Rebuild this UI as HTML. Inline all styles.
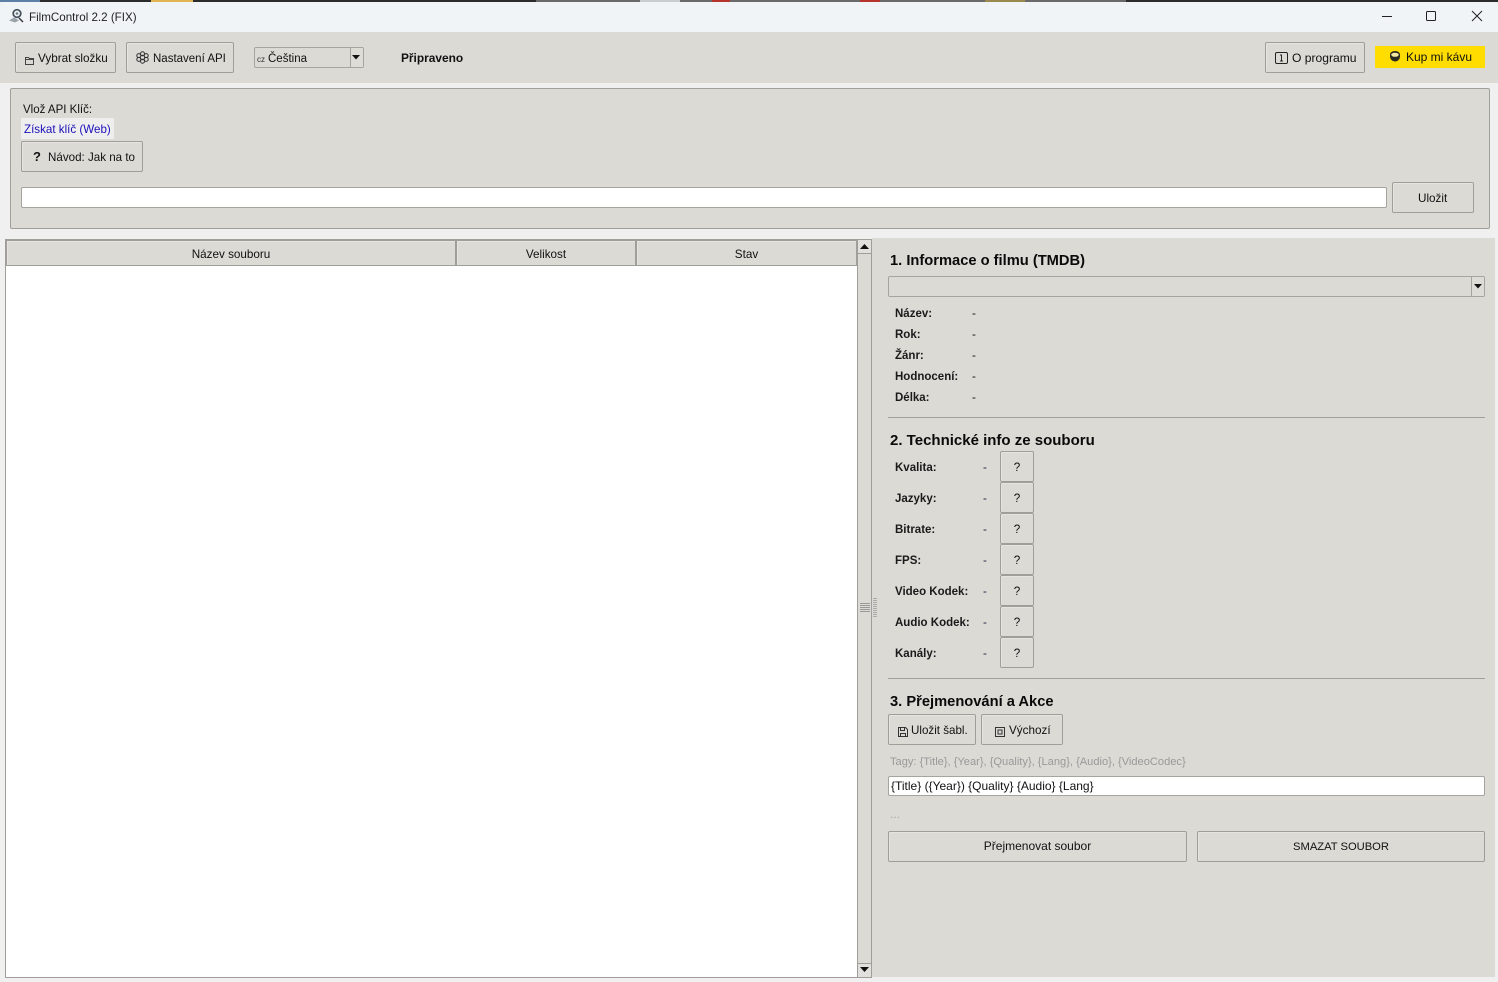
<!DOCTYPE html>
<html><head><meta charset="utf-8"><style>
html,body{margin:0;padding:0;width:1498px;height:982px;overflow:hidden;background:#f0f0f0}
body{position:relative;font-family:"Liberation Sans",sans-serif;font-size:11.7px;color:#111}
.a,.t,.b{position:absolute;box-sizing:border-box;white-space:nowrap}
.t{line-height:16px;height:16px;margin-top:1px}
.b{background:#dcdad5;border:1px solid #9f9e98;border-radius:2px;text-align:center;box-shadow:inset 1px 1px 0 #e6e4e0}
.l{font-weight:bold;font-size:11.5px;color:#1a1a1a}
.h{font-weight:bold;font-size:14.7px;line-height:18px;height:18px;color:#0a0a0a;margin-top:0}
.n{margin-top:0}
.q{width:34px;height:31px;line-height:32px;left:1000px}
svg{position:absolute;overflow:visible}
</style></head><body>
<div class="a" style="left:0;top:0;width:1498px;height:2px;background:#2b2b2b"></div>
<div class="a" style="left:0;top:0;width:40px;height:2px;background:#5c7fa8"></div>
<div class="a" style="left:151px;top:0;width:42px;height:2px;background:#e0b552"></div>
<div class="a" style="left:536px;top:0;width:590px;height:2px;background:#6a6a6a"></div>
<div class="a" style="left:640px;top:0;width:40px;height:2px;background:#c9cdd2"></div>
<div class="a" style="left:712px;top:0;width:18px;height:2px;background:#b7332d"></div>
<div class="a" style="left:860px;top:0;width:20px;height:2px;background:#b7332d"></div>
<div class="a" style="left:985px;top:0;width:40px;height:2px;background:#9a8a50"></div>
<div class="a" style="left:0;top:2px;width:1498px;height:30px;background:#f0f4f7;border-radius:6px 6px 0 0"></div>
<svg style="left:8px;top:8px" width="16" height="16" viewBox="0 0 16 16" fill="none"><path d="M1 12.500L6 9.500l5 3-4 2z" fill="#9aa2aa"/><circle cx="9" cy="5.500" r="3.800" stroke="#44505c" stroke-width="1.700"/><circle cx="9" cy="5.500" r="1.300" fill="#6d7882"/><path d="M11 10l4 4" stroke="#333" stroke-width="1.400"/></svg>
<div class="t" style="left:29px;top:9px;font-size:11.6px;color:#222">FilmControl 2.2 (FIX)</div>
<svg style="left:1381px;top:10px" width="100" height="12" fill="none" stroke="#222" stroke-width="1"><path d="M1 6.500h10"/><rect x="45.500" y="1.500" width="9" height="9" rx="1"/><path d="M91 1l10 10M101 1L91 11"/></svg>

<div class="a" style="left:0;top:32px;width:1498px;height:51px;background:#dcdad5"></div>
<div class="b" style="left:15px;top:42px;width:101px;height:31px"></div>
<svg style="left:24px;top:54px" width="11" height="11" fill="none" stroke="#444"><path d="M1.500 10.500v-7h3l1 1h4v6z"/><path d="M1.500 5.500h8"/></svg>
<div class="t" style="left:38px;top:50px">Vybrat složku</div>
<div class="b" style="left:126px;top:42px;width:108px;height:31px"></div>
<svg style="left:136px;top:51px" width="13" height="13" fill="none" stroke="#333"><circle cx="6.500" cy="6.500" r="2.200"/><circle cx="6.500" cy="2.800" r="2"/><circle cx="6.500" cy="10.200" r="2"/><circle cx="2.800" cy="4.600" r="2"/><circle cx="10.200" cy="4.600" r="2"/><circle cx="2.800" cy="8.400" r="2"/><circle cx="10.200" cy="8.400" r="2"/></svg>
<div class="t" style="left:153px;top:50px;font-size:11.5px">Nastavení API</div>
<div class="a" style="left:254px;top:47px;width:110px;height:21px;background:#dcdad5;border:1px solid #a5a49e;border-radius:2px"></div>
<div class="a" style="left:350px;top:48px;width:13px;height:19px;background:#dedcd7;border-left:1px solid #a5a49e"></div>
<svg style="left:352px;top:55px" width="9" height="6"><path d="M0 0h8L4 4.500z" fill="#111"/></svg>
<div class="t n" style="left:257px;top:52px;font-size:8px;color:#333">cz</div>
<div class="t" style="left:268px;top:50px;font-size:11.500px">Čeština</div>
<div class="t n" style="left:401px;top:50px;font-weight:bold;font-size:11.900px">Připraveno</div>
<div class="b" style="left:1265px;top:42px;width:100px;height:31px"></div>
<svg style="left:1275px;top:52px" width="13" height="12" fill="none" stroke="#222"><rect x=".5" y=".5" width="12" height="11" rx="1.500"/><path d="M6.500 3v6M5 3h2M5 9h3"/></svg>
<div class="t n" style="left:1292px;top:50px;font-size:12.100px">O programu</div>
<div class="a" style="left:1375px;top:46px;width:110px;height:22px;background:#ffdd00"></div>
<svg style="left:1389px;top:51px" width="13" height="12"><path d="M1 3.500a5 3.500 0 0 1 10 0v2a5 5 0 0 1-10 0z" fill="#2a2a20"/><ellipse cx="6" cy="3.800" rx="3.800" ry="2" fill="#f3e9a0"/></svg>
<div class="t n" style="left:1406px;top:49px;font-size:12px">Kup mi kávu</div>

<div class="a" style="left:10px;top:88px;width:1480px;height:141px;background:#dcdad5;border:1px solid #a09f99;border-radius:2px"></div>
<div class="t" style="left:23px;top:101px;font-size:11.500px">Vlož API Klíč:</div>
<div class="a" style="left:21px;top:118px;width:93px;height:21px;background:#eeeeee"></div>
<div class="t" style="left:24px;top:121px;color:#1c10b8;font-size:11.600px">Získat klíč (Web)</div>
<div class="b" style="left:21px;top:141px;width:122px;height:31px"></div>
<div class="t n" style="left:33px;top:149px;font-weight:bold;font-size:13px">?</div>
<div class="t" style="left:48px;top:149px;font-size:11.600px">Návod: Jak na to</div>
<div class="a" style="left:21px;top:187px;width:1366px;height:21px;background:#fff;border:1px solid #a5a49e;border-radius:2px"></div>
<div class="b" style="left:1392px;top:182px;width:82px;height:31px"></div>
<div class="t" style="left:1418px;top:190px">Uložit</div>

<div class="a" style="left:5px;top:239px;width:853px;height:739px;background:#fff;border:1px solid #9f9e98"></div>
<div class="b" style="left:6px;top:240px;width:450px;height:26px;border-radius:0;line-height:28px">Název souboru</div>
<div class="b" style="left:456px;top:240px;width:180px;height:26px;border-radius:0;line-height:28px">Velikost</div>
<div class="b" style="left:636px;top:240px;width:221px;height:26px;border-radius:0;line-height:28px">Stav</div>
<div class="a" style="left:857px;top:239px;width:15px;height:739px;background:#dcdad5;border:1px solid #9f9e98"></div>
<div class="a" style="left:858px;top:240px;width:13px;height:14px;background:#e2e0dc;border-bottom:1px solid #9f9e98"></div>
<svg style="left:860px;top:244px" width="9" height="6"><path d="M0 5h9L4.500 0z" fill="#111"/></svg>
<div class="a" style="left:858px;top:963px;width:13px;height:14px;background:#e2e0dc;border-top:1px solid #9f9e98"></div>
<svg style="left:860px;top:967px" width="9" height="6"><path d="M0 0h9L4.500 5z" fill="#111"/></svg>

<div class="a" style="left:872px;top:238px;width:623px;height:739px;background:#dcdad5"></div>
<svg style="left:860px;top:603px" width="18" height="15" stroke="#999" fill="none" stroke-width="1"><path d="M0 .5h10M0 2.500h10M0 4.500h10M0 6.500h10M0 8.500h10"/><path d="M13 -4.500h4M13 -2.500h4M13 -.5h4M13 1.500h4M13 3.500h4M13 5.500h4M13 7.500h4M13 9.500h4M13 11.500h4M13 13.500h4" stroke="#aaa"/></svg>
<div class="t h" style="left:890px;top:252px">1. Informace o filmu (TMDB)</div>
<div class="a" style="left:888px;top:276px;width:597px;height:21px;background:#dcdad5;border:1px solid #a5a49e;border-radius:2px"></div>
<div class="a" style="left:1471px;top:277px;width:13px;height:19px;background:#dedcd7;border-left:1px solid #a5a49e"></div>
<svg style="left:1474px;top:284px" width="9" height="6"><path d="M0 0h8L4 4.500z" fill="#111"/></svg>
<div class="t l" style="left:895px;top:305px">Název:</div><div class="t" style="left:972px;top:305px">-</div>
<div class="t l" style="left:895px;top:326px">Rok:</div><div class="t" style="left:972px;top:326px">-</div>
<div class="t l" style="left:895px;top:347px">Žánr:</div><div class="t" style="left:972px;top:347px">-</div>
<div class="t l" style="left:895px;top:368px">Hodnocení:</div><div class="t" style="left:972px;top:368px">-</div>
<div class="t l" style="left:895px;top:389px">Délka:</div><div class="t" style="left:972px;top:389px">-</div>
<div class="a" style="left:888px;top:417px;width:597px;height:1px;background:#a09f99"></div>
<div class="t h" style="left:890px;top:432px;font-size:15px">2. Technické info ze souboru</div>

<div class="t l" style="left:895px;top:459px">Kvalita:</div><div class="t" style="left:983px;top:459px;color:#224">-</div><div class="b q" style="top:451px">?</div>
<div class="t l" style="left:895px;top:490px">Jazyky:</div><div class="t" style="left:983px;top:490px;color:#224">-</div><div class="b q" style="top:482px">?</div>
<div class="t l" style="left:895px;top:521px">Bitrate:</div><div class="t" style="left:983px;top:521px;color:#224">-</div><div class="b q" style="top:513px">?</div>
<div class="t l" style="left:895px;top:552px">FPS:</div><div class="t" style="left:983px;top:552px;color:#224">-</div><div class="b q" style="top:544px">?</div>
<div class="t l" style="left:895px;top:583px">Video Kodek:</div><div class="t" style="left:983px;top:583px;color:#224">-</div><div class="b q" style="top:575px">?</div>
<div class="t l" style="left:895px;top:614px">Audio Kodek:</div><div class="t" style="left:983px;top:614px;color:#224">-</div><div class="b q" style="top:606px">?</div>
<div class="t l" style="left:895px;top:645px">Kanály:</div><div class="t" style="left:983px;top:645px;color:#224">-</div><div class="b q" style="top:637px">?</div>
<div class="a" style="left:888px;top:678px;width:597px;height:1px;background:#a09f99"></div>
<div class="t h" style="left:890px;top:693px">3. Přejmenování a Akce</div>

<div class="b" style="left:888px;top:714px;width:88px;height:31px"></div>
<svg style="left:898px;top:727px" width="10" height="10" fill="none" stroke="#333"><path d="M.5.500h7l2 2v7h-9z"/><path d="M2.500.500v3h4v-3M2.500 9.500v-3h5v3"/></svg>
<div class="t" style="left:911px;top:722px;font-size:11.600px">Uložit šabl.</div>
<div class="b" style="left:981px;top:714px;width:82px;height:31px"></div>
<svg style="left:995px;top:727px" width="10" height="10" fill="none" stroke="#333"><rect x=".5" y=".5" width="9" height="9"/><rect x="3" y="3" width="4" height="4"/></svg>
<div class="t" style="left:1009px;top:722px">Výchozí</div>
<div class="t" style="left:890px;top:753px;font-size:11.100px;color:#999">Tagy: {Title}, {Year}, {Quality}, {Lang}, {Audio}, {VideoCodec}</div>
<div class="a" style="left:888px;top:776px;width:597px;height:20px;background:#fff;border:1px solid #a5a49e;border-radius:2px"></div>
<div class="t n" style="left:891px;top:778px;font-size:12px">{Title} ({Year}) {Quality} {Audio} {Lang}</div>
<div class="t n" style="left:890px;top:806px;font-size:12px;color:#aaa">...</div>
<div class="b" style="left:888px;top:831px;width:299px;height:31px;line-height:29px;font-size:12px">Přejmenovat soubor</div>
<div class="b" style="left:1197px;top:831px;width:288px;height:31px;line-height:30px;font-size:11.200px">SMAZAT SOUBOR</div>
</body></html>
